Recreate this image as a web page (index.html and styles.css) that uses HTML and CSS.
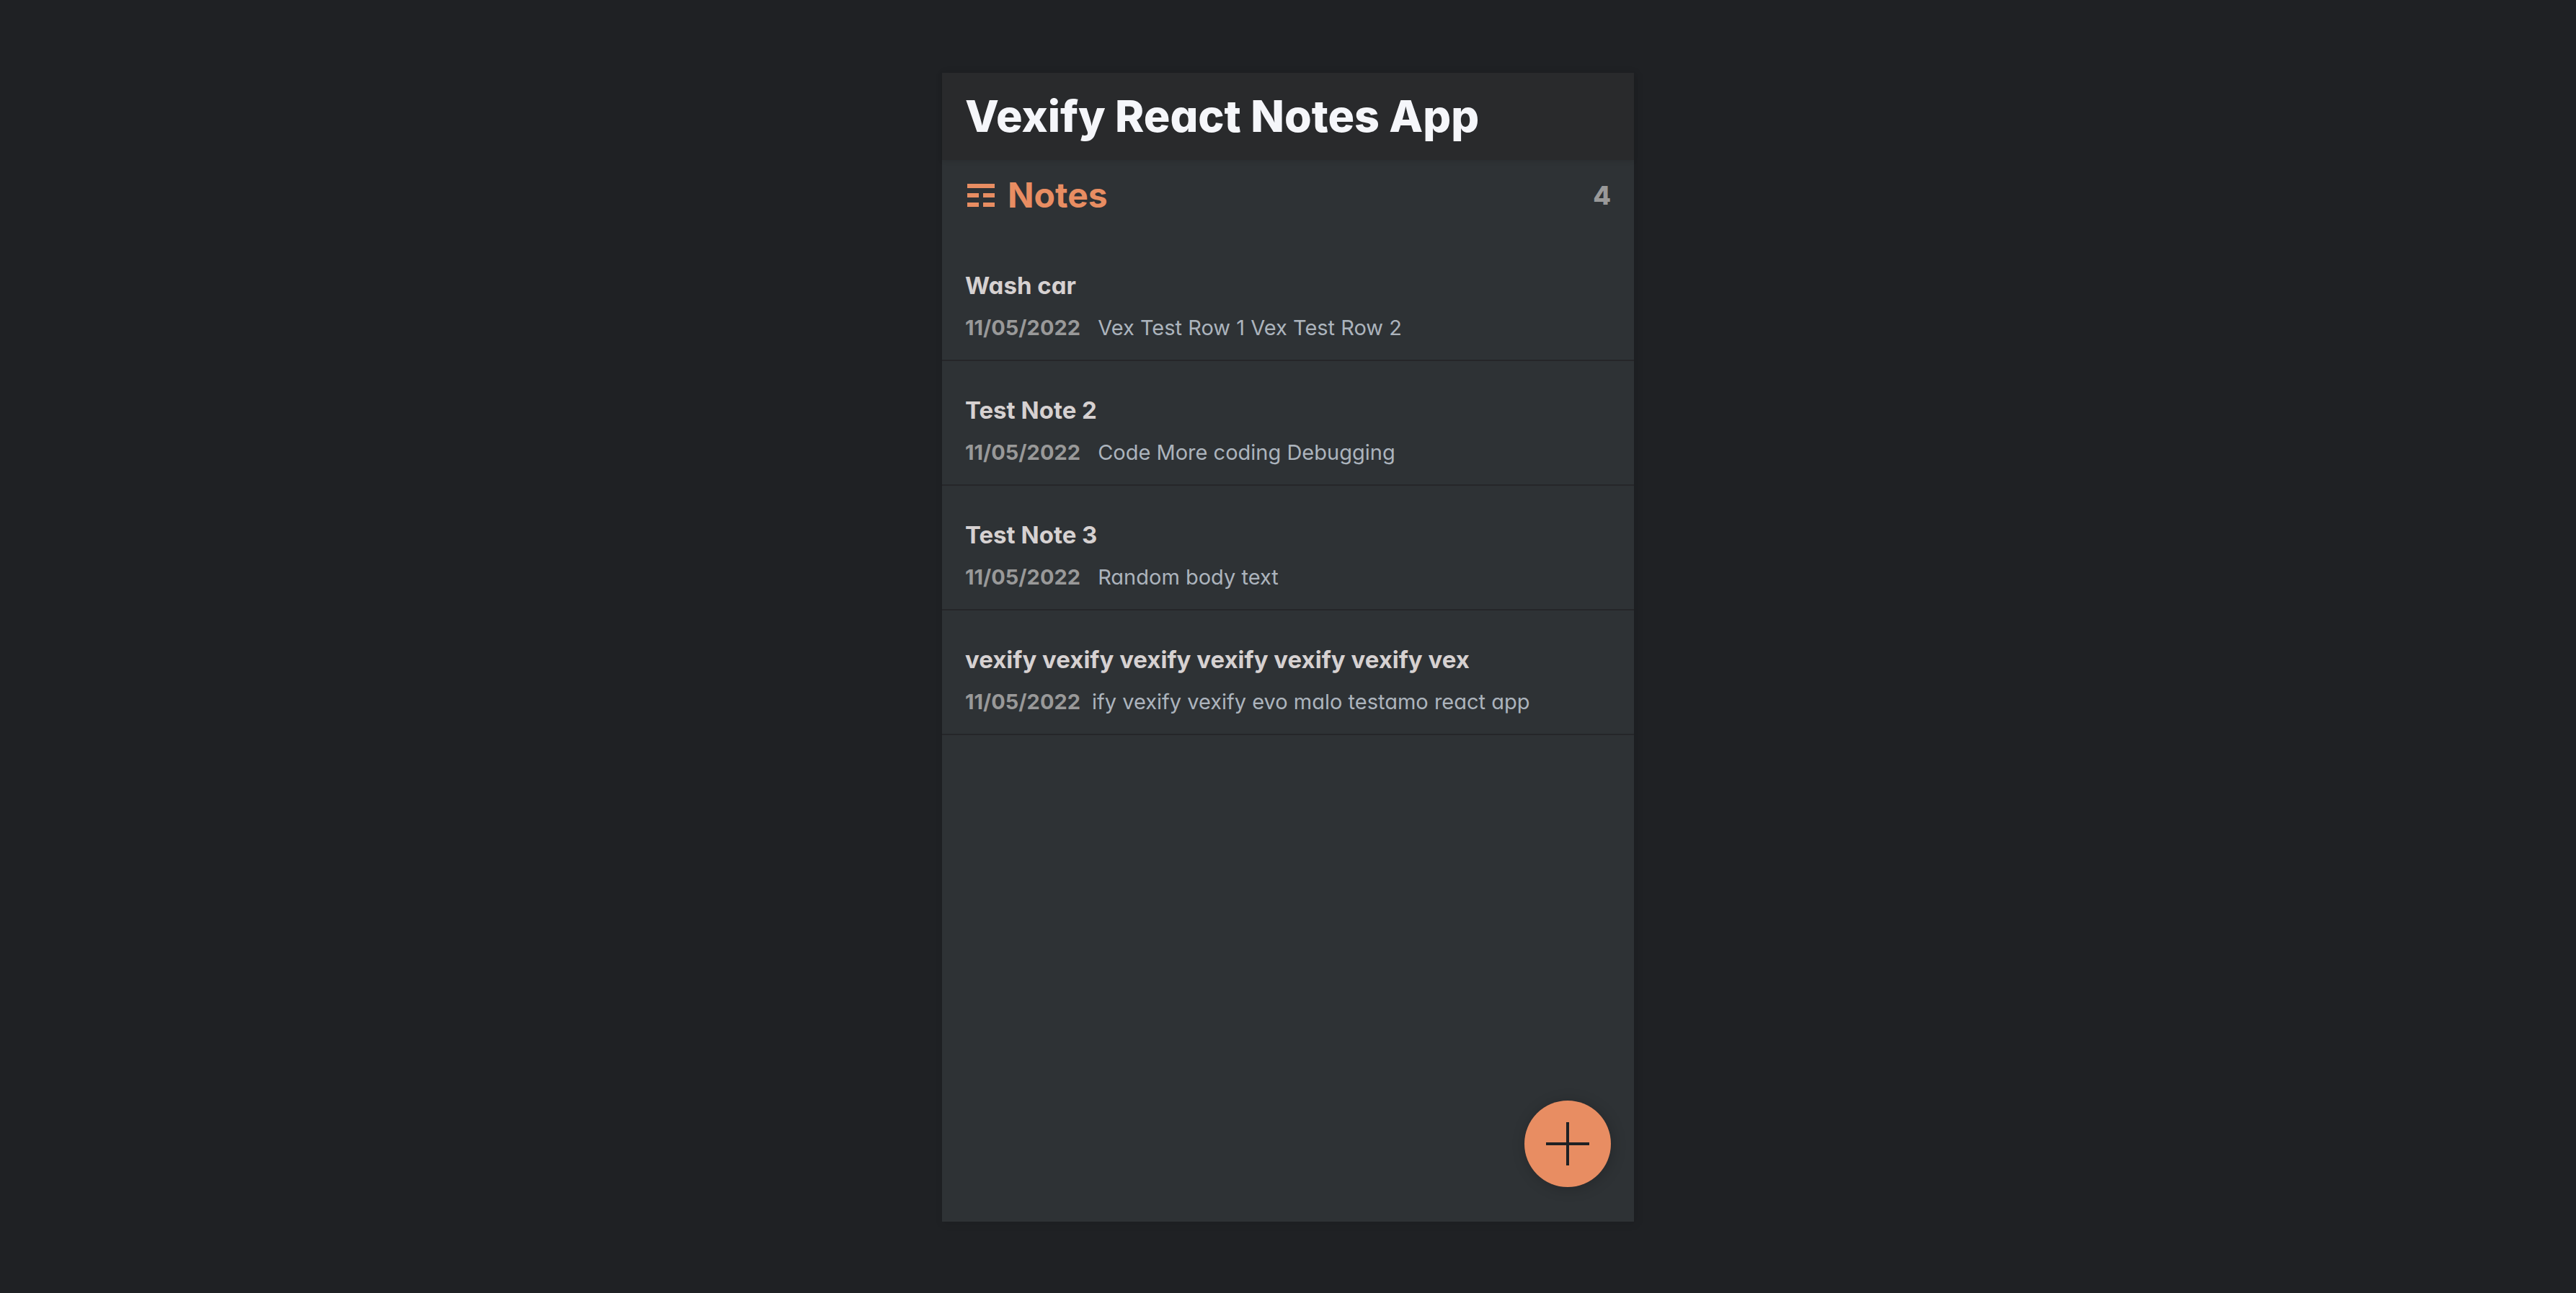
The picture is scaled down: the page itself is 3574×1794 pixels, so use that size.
FILE: index.html
```html
<!DOCTYPE html>
<html lang="en">
<head>
  <meta charset="utf-8">
  <meta name="viewport" content="width=device-width, initial-scale=1">
  <title>Vexify React Notes App</title>
  <link rel="stylesheet" href="styles.css">
</head>
<body>
  <div class="container">
    <div class="app">
      <header class="app-header">
        <h1 class="app-title">Vexify React Notes App</h1>
      </header>
      <main class="notes">
        <div class="notes-header">
          <h2 class="notes-title">
            <svg class="notes-icon" viewBox="0 0 38 32" aria-hidden="true">
              <path d="M0 0h38v6H0zM0 13h16v6H0zM22 13h16v6H22zM0 26h16v6H0zM22 26h16v6H22z" fill="currentColor"/>
            </svg>
            Notes
          </h2>
          <p class="notes-count">4</p>
        </div>
        <div class="notes-list">
          <a class="note" href="#note-1">
            <h3 class="note-title">Wash car</h3>
            <p class="note-line"><time class="note-date">11/05/2022</time><span class="note-body">&nbsp;Vex Test Row 1 Vex Test Row 2</span></p>
          </a>
          <a class="note" href="#note-2">
            <h3 class="note-title">Test Note 2</h3>
            <p class="note-line"><time class="note-date">11/05/2022</time><span class="note-body">&nbsp;Code More coding Debugging</span></p>
          </a>
          <a class="note" href="#note-3">
            <h3 class="note-title">Test Note 3</h3>
            <p class="note-line"><time class="note-date">11/05/2022</time><span class="note-body">&nbsp;Random body text</span></p>
          </a>
          <a class="note" href="#note-4">
            <h3 class="note-title">vexify vexify vexify vexify vexify vexify vex</h3>
            <p class="note-line"><time class="note-date">11/05/2022</time><span class="note-body">ify vexify vexify evo malo testamo react app</span></p>
          </a>
        </div>
      </main>
      <button class="add-button" type="button" aria-label="Add note">
        <svg class="add-icon" viewBox="0 0 60 60" aria-hidden="true">
          <path d="M30 0v60M0 30h60" fill="none" stroke="currentColor" stroke-width="4"/>
        </svg>
      </button>
    </div>
  </div>
</body>
</html>
```
FILE: styles.css
```css
:root {
  --main: #e88d62;
  --text: #d6d1d1;
  --body: #acb4bd;
  --bright: #f5f6fa;
  --gray: #999999;
  --bg: #1f2124;
  --header: #292a2c;
  --panel: #2e3235;
  --border: #252629;
}

* {
  box-sizing: border-box;
  margin: 0;
  padding: 0;
}

body {
  background: var(--bg);
  color: var(--text);
  font-family: Inter, "Noto Sans", sans-serif;
  font-feature-settings: "cv11";
}

.container {
  display: flex;
  flex-direction: column;
  max-width: 960px;
  min-height: 100vh;
  margin: 0 auto;
  padding: 101px 0 99px;
}

.app {
  position: relative;
  flex: 1;
  background: var(--panel);
  box-shadow: 2px 2px 12px rgba(0, 0, 0, 0.1);
}

.app-header {
  padding: 24px 32px 25px;
  background: var(--header);
  box-shadow: 0 2px 6px rgba(0, 0, 0, 0.1);
}

.app-title {
  color: var(--bright);
  font-size: 61px;
  font-weight: 800;
  line-height: 72px;
}

.notes-header {
  display: flex;
  align-items: center;
  justify-content: space-between;
  padding: 19px 32px 27px;
}

.notes-title {
  display: flex;
  align-items: center;
  gap: 18px;
  padding-left: 3px;
  color: var(--main);
  font-size: 48px;
  font-weight: 700;
  line-height: 60px;
}

.notes-icon {
  width: 38px;
  height: 32px;
}

.notes-count {
  color: var(--gray);
  font-size: 36px;
  font-weight: 800;
  line-height: 60px;
}

.note {
  display: block;
  padding: 48px 32px 26px;
  border-bottom: 2px solid var(--border);
  color: var(--text);
  text-decoration: none;
}

.note-title {
  margin-bottom: 21px;
  font-size: 33px;
  font-weight: 700;
  line-height: 40px;
}

.note-line {
  display: flex;
  gap: 16px;
  font-size: 29px;
  line-height: 36px;
}

.note-date {
  color: var(--gray);
  font-weight: 700;
}

.note-body {
  color: var(--body);
}

.add-button {
  position: absolute;
  right: 32px;
  bottom: 48px;
  display: flex;
  align-items: center;
  justify-content: center;
  width: 120px;
  height: 120px;
  border: 0;
  border-radius: 50%;
  background: var(--main);
  color: var(--bg);
  box-shadow: 2px 2px 20px rgba(0, 0, 0, 0.2);
  cursor: pointer;
}

.add-icon {
  width: 60px;
  height: 60px;
}
```
